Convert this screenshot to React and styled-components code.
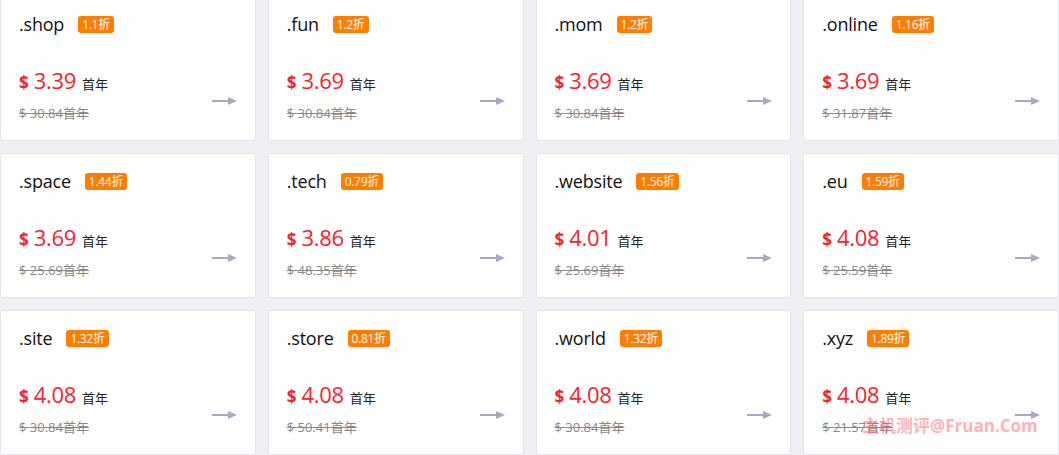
import React from 'react';
import styled, { createGlobalStyle } from 'styled-components';

const GlobalStyle = createGlobalStyle`
  html, body {
    margin: 0;
    padding: 0;
    background: #eef0f4;
    overflow: hidden;
  }
  body {
    font-family: "Open Sans", "Noto Sans CJK SC", sans-serif;
  }
`;

const Page = styled.div`
  position: relative;
  width: 1059px;
  height: 455px;
  overflow: hidden;
`;

const Grid = styled.div`
  display: grid;
  grid-template-columns: repeat(4, 1fr);
  grid-auto-rows: 145px;
  gap: 12px;
  margin-top: -4px;
`;

const Card = styled.div`
  background: #fff;
  border: 1px solid #e1e4ea;
  border-radius: 3px;
  padding: 15px 18px 0 18px;
  display: flex;
  flex-direction: column;
  box-sizing: border-box;
`;

const Head = styled.div`
  display: flex;
  align-items: center;
  height: 24px;
`;

const Name = styled.span`
  font-size: 18px;
  font-weight: 500;
  color: #111;
  letter-spacing: -0.2px;
`;

const Badge = styled.span`
  margin-left: 14px;
  background: #ff7d00;
  color: #fff;
  font-size: 12px;
  line-height: 17px;
  height: 17px;
  padding: 0 4px;
  border-radius: 3px;
  letter-spacing: -0.3px;
`;

const Bottom = styled.div`
  display: flex;
  justify-content: space-between;
  margin-top: 30px;
`;

const Prices = styled.div`
  display: flex;
  flex-direction: column;
`;

const Price = styled.div`
  display: flex;
  align-items: baseline;
  height: 28px;
  line-height: 28px;
  color: #f5222f;
`;

const Dollar = styled.span`
  font-size: 17px;
  font-weight: 700;
  margin-right: 5px;
`;

const Amount = styled.span`
  font-size: 22px;
  font-weight: 500;
  letter-spacing: -0.3px;
`;

const Unit = styled.span`
  font-size: 13px;
  color: #222;
  margin-left: 6px;
`;

const Original = styled.div`
  margin-top: 10px;
  font-size: 13px;
  line-height: 18px;
  color: #888;
  text-decoration: line-through;
`;

const Arrow = styled.svg`
  margin-top: 30px;
  width: 25px;
  height: 10px;
`;

const Watermark = styled.div`
  position: absolute;
  left: 862px;
  top: 414px;
  font-size: 17px;
  font-weight: 700;
  line-height: 24px;
  color: rgba(255, 100, 110, 0.5);
  pointer-events: none;
`;

const domains = [
  ['.shop', '1.1折', '3.39', '30.84'],
  ['.fun', '1.2折', '3.69', '30.84'],
  ['.mom', '1.2折', '3.69', '30.84'],
  ['.online', '1.16折', '3.69', '31.87'],
  ['.space', '1.44折', '3.69', '25.69'],
  ['.tech', '0.79折', '3.86', '48.35'],
  ['.website', '1.56折', '4.01', '25.69'],
  ['.eu', '1.59折', '4.08', '25.59'],
  ['.site', '1.32折', '4.08', '30.84'],
  ['.store', '0.81折', '4.08', '50.41'],
  ['.world', '1.32折', '4.08', '30.84'],
  ['.xyz', '1.89折', '4.08', '21.57'],
];

function ArrowIcon() {
  return (
    <Arrow viewBox="0 0 25 10">
      <line x1="0" y1="5" x2="18" y2="5" stroke="#a3abc2" strokeWidth="2" />
      <polygon points="16,1 25,5 16,9" fill="#a3abc2" />
    </Arrow>
  );
}

export default function App() {
  return (
    <Page>
      <GlobalStyle />
      <Grid>
        {domains.map(([name, off, price, orig]) => (
          <Card key={name}>
            <Head>
              <Name>{name}</Name>
              <Badge>{off}</Badge>
            </Head>
            <Bottom>
              <Prices>
                <Price>
                  <Dollar>$</Dollar>
                  <Amount>{price}</Amount>
                  <Unit>首年</Unit>
                </Price>
                <Original>$ {orig}首年</Original>
              </Prices>
              <ArrowIcon />
            </Bottom>
          </Card>
        ))}
      </Grid>
      <Watermark>主机测评@Fruan.Com</Watermark>
    </Page>
  );
}
